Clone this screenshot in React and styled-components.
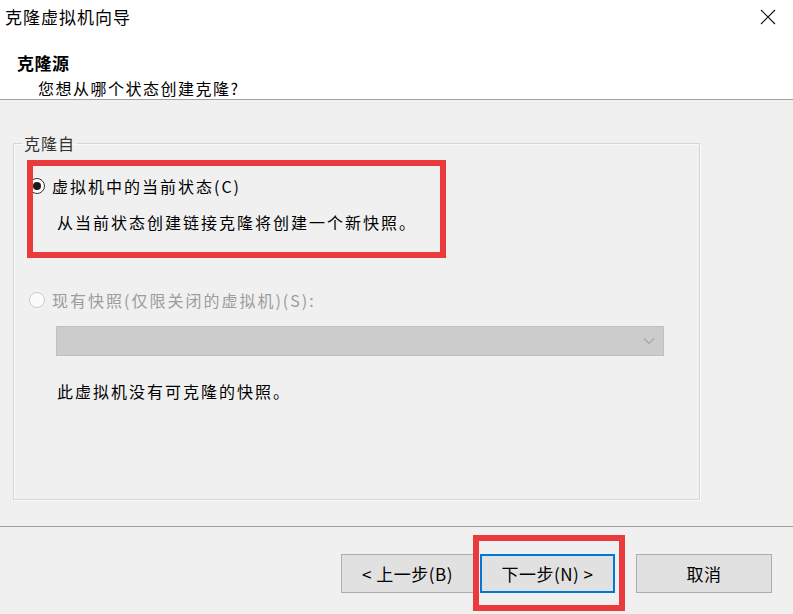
import React from 'react';
import styled, { createGlobalStyle } from 'styled-components';

const GlobalStyle = createGlobalStyle`
  html, body {
    margin: 0;
    padding: 0;
    background: #ffffff;
  }
  body {
    font-family: "Noto Sans CJK SC", "Noto Sans", sans-serif;
    color: #000;
  }
  * {
    box-sizing: border-box;
  }
`;

const Window = styled.div`
  width: 793px;
  height: 614px;
  display: flex;
  flex-direction: column;
  overflow: hidden;
  background: #f0f0f0;
`;

const Header = styled.div`
  height: 100px;
  background: #ffffff;
  border-bottom: 1px solid #a0a0a0;
`;

const TitleBar = styled.div`
  height: 34px;
  display: flex;
  align-items: center;
  justify-content: space-between;
  padding: 0 17px 0 5px;
`;

const Title = styled.div`
  font-size: 17px;
  line-height: 22px;
  letter-spacing: 1px;
`;

const CloseIcon = styled.svg`
  width: 16px;
  height: 16px;
  display: block;
`;

const HeaderText = styled.div`
  padding: 18px 0 0 17px;
`;

const Heading = styled.div`
  font-size: 17px;
  font-weight: 700;
  line-height: 22px;
  letter-spacing: 0.5px;
`;

const SubHeading = styled.div`
  margin-top: 3px;
  padding-left: 21px;
  font-size: 16px;
  line-height: 22px;
  letter-spacing: 1.5px;
`;

const Body = styled.div`
  height: 426px;
  padding: 33px 93px 26px 13px;
`;

const GroupBox = styled.fieldset`
  height: 100%;
  margin: 0;
  padding: 0;
  min-width: 0;
  border: 1px solid #d6d6d6;
  box-shadow: inset 1px 1px 0 #fafafa, 1px 1px 0 #fafafa;
`;

const Legend = styled.legend`
  margin-left: 8px;
  padding: 0 2px;
  font-size: 16px;
  line-height: 20px;
  letter-spacing: 1px;
  color: #333;
`;

const OptionBlock = styled.div`
  position: relative;
  margin-top: ${props => props.gap}px;
`;

const OptionRow = styled.div`
  display: flex;
  align-items: center;
  height: 22px;
  padding-left: 15px;
  gap: 7px;
  color: ${props => props.disabled ? '#9c9c9c' : '#000'};
`;

const Radio = styled.span`
  width: 16px;
  height: 16px;
  border-radius: 50%;
  border: 1px solid ${props => props.disabled ? '#cccccc' : '#333333'};
  background: ${props => props.disabled ? '#fbfbfb' : '#ffffff'};
  display: flex;
  align-items: center;
  justify-content: center;
  flex-shrink: 0;

  &::after {
    content: '';
    display: ${props => props.checked ? 'block' : 'none'};
    width: 8px;
    height: 8px;
    border-radius: 50%;
    background: #1a1a1a;
  }
`;

const OptionLabel = styled.span`
  font-size: 16px;
  line-height: 22px;
  letter-spacing: 2px;
`;

const Note = styled.div`
  margin-top: ${props => props.gap}px;
  padding-left: 43px;
  font-size: 16px;
  line-height: 22px;
  letter-spacing: 2px;
`;

const Highlight = styled.div`
  position: absolute;
  left: 13px;
  top: -15px;
  width: 419px;
  height: 98px;
  border: 6px solid #ea3a3c;
  pointer-events: none;
`;

const Select = styled.div`
  margin: 15px 0 0 42px;
  width: 608px;
  height: 30px;
  background: #cccccc;
  border: 1px solid #bfbfbf;
  display: flex;
  align-items: center;
  justify-content: flex-end;
  padding-right: 8px;
`;

const Chevron = styled.svg`
  width: 12px;
  height: 8px;
  display: block;
`;

const Footer = styled.div`
  flex: 1;
  border-top: 1px solid #a0a0a0;
  display: flex;
  justify-content: flex-end;
  align-items: flex-start;
  padding: 27px 21px 0 0;
`;

const ButtonWrap = styled.div`
  position: relative;
  margin-left: ${props => props.gap}px;
`;

const Button = styled.button`
  width: ${props => props.width}px;
  height: 39px;
  background: #e1e1e1;
  border: ${props => props.primary ? '2px solid #0078d7' : '1px solid #adadad'};
  font-family: "Noto Sans CJK SC", "Noto Sans", sans-serif;
  font-size: 17px;
  letter-spacing: 0.5px;
  color: #000;
  padding: 0;
`;

const ButtonHighlight = styled.div`
  position: absolute;
  left: -7px;
  top: -19px;
  width: 152px;
  height: 76px;
  border: 6px solid #ea3a3c;
  pointer-events: none;
`;

export default function App() {
  return (
    <>
      <GlobalStyle />
      <Window>
        <Header>
          <TitleBar>
            <Title>克隆虚拟机向导</Title>
            <CloseIcon viewBox="0 0 16 16">
              <path d="M1 1 L15 15 M15 1 L1 15" stroke="#111" strokeWidth="1.1" fill="none" />
            </CloseIcon>
          </TitleBar>
          <HeaderText>
            <Heading>克隆源</Heading>
            <SubHeading>您想从哪个状态创建克隆?</SubHeading>
          </HeaderText>
        </Header>

        <Body>
          <GroupBox>
            <Legend>克隆自</Legend>

            <OptionBlock gap={22}>
              <OptionRow>
                <Radio checked />
                <OptionLabel>虚拟机中的当前状态(C)</OptionLabel>
              </OptionRow>
              <Note gap={14}>从当前状态创建链接克隆将创建一个新快照。</Note>
              <Highlight />
            </OptionBlock>

            <OptionBlock gap={56}>
              <OptionRow disabled>
                <Radio disabled />
                <OptionLabel>现有快照(仅限关闭的虚拟机)(S):</OptionLabel>
              </OptionRow>
              <Select>
                <Chevron viewBox="0 0 12 8">
                  <path d="M1 1.5 L6 6.5 L11 1.5" stroke="#a6a6a6" strokeWidth="1.2" fill="none" />
                </Chevron>
              </Select>
              <Note gap={24}>此虚拟机没有可克隆的快照。</Note>
            </OptionBlock>
          </GroupBox>
        </Body>

        <Footer>
          <ButtonWrap gap={0}>
            <Button width={133}>&lt; 上一步(B)</Button>
          </ButtonWrap>
          <ButtonWrap gap={6}>
            <Button width={135} primary>下一步(N) &gt;</Button>
            <ButtonHighlight />
          </ButtonWrap>
          <ButtonWrap gap={21}>
            <Button width={136}>取消</Button>
          </ButtonWrap>
        </Footer>
      </Window>
    </>
  );
}
